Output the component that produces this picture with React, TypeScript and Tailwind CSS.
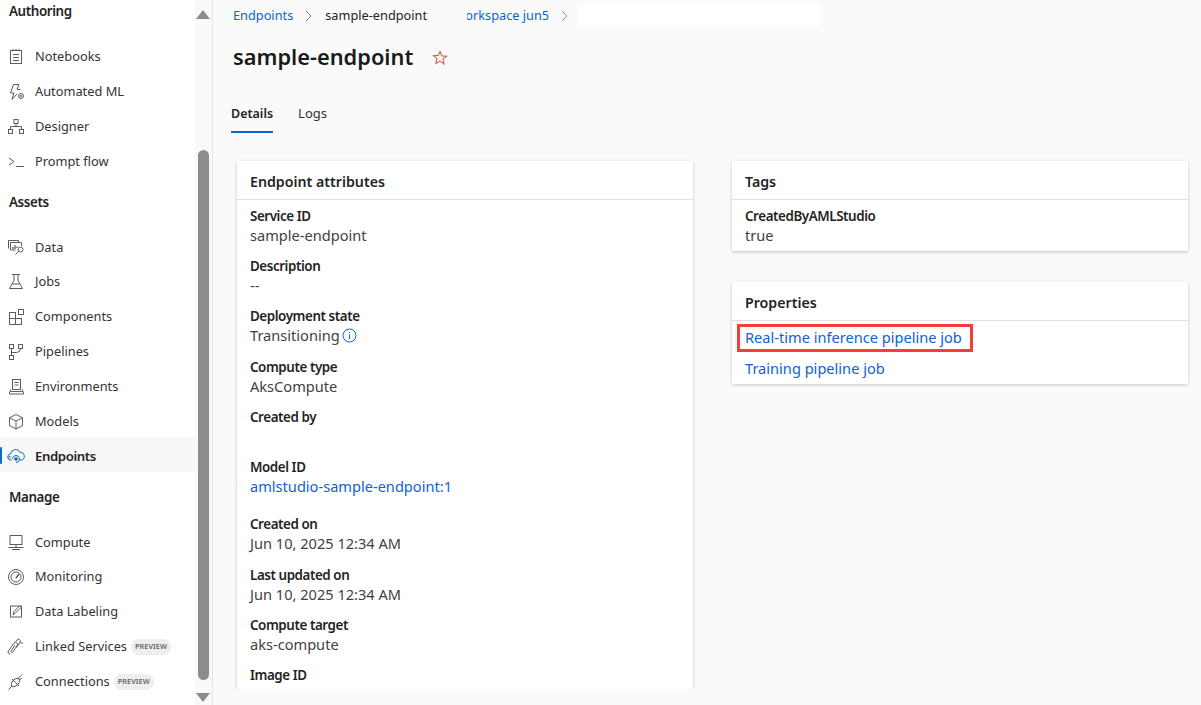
import React from "react";

const Svg = ({ children, color }: { children: React.ReactNode; color?: string }) => (
  <svg width="18" height="18" viewBox="0 0 18 18" fill="none" stroke={color || "#5c5c5c"} strokeWidth="1" className="shrink-0">
    {children}
  </svg>
);

const icons: Record<string, React.ReactNode> = {
  notebook: (
    <Svg>
      <rect x="3.5" y="2.5" width="11" height="13" />
      <path d="M6 1v2M9 1v2M12 1v2M6 6.5h6M6 9.5h6M6 12.5h6" />
    </Svg>
  ),
  automl: (
    <Svg>
      <path d="M6.5 1.5h5.5L10 6.5h3.5M6.5 1.5L3.5 10h3.5L5 16.5l5-5.5" />
      <circle cx="14" cy="13" r="2.5" />
      <circle cx="14" cy="13" r="0.8" />
    </Svg>
  ),
  designer: (
    <Svg>
      <rect x="7" y="1.5" width="4" height="4" />
      <rect x="1.5" y="11.5" width="4" height="4" />
      <rect x="12.5" y="11.5" width="4" height="4" />
      <path d="M9 5.5V8.5M3.5 11.5V8.5H14.5V11.5" />
    </Svg>
  ),
  prompt: (
    <Svg>
      <path d="M2 5l5 3.5L2 12M9 13.5h8" />
    </Svg>
  ),
  data: (
    <Svg>
      <path d="M1.5 9.5v-8h10v2M1.5 1.5h10" />
      <path d="M3.5 3.5h11v3.5M3.5 3.5v7.5h5" />
      <path d="M6 10V8M8 10V6M10 9V7.5" strokeWidth="1.3" />
      <circle cx="13.5" cy="10.5" r="2.5" />
      <path d="M11.7 12.3L8.5 15.5" />
    </Svg>
  ),
  jobs: (
    <Svg>
      <path d="M5 1.5h8M7 1.5v6L2.5 15.5h13L11 7.5v-6M5 11h8" />
    </Svg>
  ),
  components: (
    <Svg>
      <rect x="2.5" y="4.5" width="6" height="6" />
      <rect x="8.5" y="10.5" width="6" height="6" />
      <rect x="2.5" y="10.5" width="6" height="6" />
      <rect x="11.5" y="1.5" width="5" height="5" />
    </Svg>
  ),
  pipelines: (
    <Svg>
      <rect x="2.5" y="1.5" width="4" height="4" />
      <rect x="11.5" y="1.5" width="4" height="4" />
      <rect x="2.5" y="12.5" width="4" height="4" />
      <path d="M4.5 5.5v7M4.5 9.5h5q4 0 4-4" />
    </Svg>
  ),
  environments: (
    <Svg>
      <rect x="5.5" y="1.5" width="8" height="10" />
      <path d="M7.5 4.5h4M7.5 7h4M3.5 11.5v2h12v-2M2.5 13.5v2.5h14v-2.5" />
    </Svg>
  ),
  models: (
    <Svg>
      <path d="M9 1.5l6.5 3.2v8L9 16l-6.5-3.3v-8zM2.5 4.7L9 8l6.5-3.3M9 8v8" />
    </Svg>
  ),
  endpoints: (
    <Svg color="#0f6cbd">
      <path d="M4.5 12H4a3 3 0 0 1-.5-6A5 5 0 0 1 13 4.5 3.6 3.6 0 0 1 14 12h-1" />
      <path d="M5.5 11a3.5 3.5 0 1 1 3.5 3.5" />
      <circle cx="9" cy="11" r="1.3" fill="#0f6cbd" />
      <path d="M1 9h3" />
    </Svg>
  ),
  compute: (
    <Svg>
      <rect x="3" y="1.5" width="12" height="9" />
      <path d="M9 10.5v3M1.5 13.5h15M5 15.5h8" />
    </Svg>
  ),
  monitoring: (
    <Svg>
      <circle cx="9" cy="9" r="7.5" />
      <circle cx="9" cy="9" r="5" />
      <path d="M9 10l3-4" strokeWidth="1.5" />
    </Svg>
  ),
  labeling: (
    <Svg>
      <rect x="3.5" y="3" width="11" height="11" />
      <path d="M6 11.5l1-3 5.5-5.5 1.5 1.5L8.5 10z" />
    </Svg>
  ),
  linked: (
    <Svg>
      <path d="M3 16.2a2.1 2.1 0 0 1-1.6-3.2L7 5a2 2 0 0 1 3.3 2.2l-4.6 7a1 1 0 0 1-1.7-1l3.8-6" />
      <path d="M9 3.5L10 2a1.8 1.8 0 0 1 3 2l-3.5 5.5M13.5 5H16" />
    </Svg>
  ),
  connections: (
    <Svg>
      <ellipse cx="8.5" cy="9.5" rx="5" ry="3" transform="rotate(-45 8.5 9.5)" />
      <path d="M5 6l7 7M1.5 16.5L5 13M11 5.5L15 1.5M12.5 7l2.5-2" />
    </Svg>
  ),
};

type NavItem = { label: string; icon: string; h?: string; active?: boolean; preview?: boolean };

const authoring: NavItem[] = [
  { label: "Notebooks", icon: "notebook" },
  { label: "Automated ML", icon: "automl" },
  { label: "Designer", icon: "designer" },
  { label: "Prompt flow", icon: "prompt" },
];
const assets: NavItem[] = [
  { label: "Data", icon: "data", h: "h-[34px] pt-[2px]" },
  { label: "Jobs", icon: "jobs" },
  { label: "Components", icon: "components" },
  { label: "Pipelines", icon: "pipelines" },
  { label: "Environments", icon: "environments" },
  { label: "Models", icon: "models" },
  { label: "Endpoints", icon: "endpoints", active: true },
];
const manage: NavItem[] = [
  { label: "Compute", icon: "compute", h: "h-[34px] pt-[2px]" },
  { label: "Monitoring", icon: "monitoring" },
  { label: "Data Labeling", icon: "labeling" },
  { label: "Linked Services", icon: "linked", preview: true },
  { label: "Connections", icon: "connections", preview: true },
];

const NavRow = ({ item }: { item: NavItem }) => (
  <div className={`relative flex items-center gap-[10px] pl-[7px] ${item.h || "h-[35px]"} ${item.active ? "-mt-[2px] mb-[2px] bg-[#f7f7f7] pt-[5px] font-semibold text-[#242424]" : "text-[#333]"}`}>
    {item.active && <div className="absolute left-0 top-[10px] h-[17px] w-[2px] rounded-sm bg-[#0f6cbd]" />}
    {icons[item.icon]}
    <span className={item.active ? "text-[13.2px] tracking-[-0.4px]" : ""}>{item.label}</span>
    {item.preview && (
      <span className="-ml-[6px] flex h-[16px] w-[40px] items-center justify-center rounded-full bg-[#eeeeee] text-[7.4px] font-semibold text-[#666]">
        PREVIEW
      </span>
    )}
  </div>
);

const NavHeading = ({ children, className }: { children: React.ReactNode; className: string }) => (
  <div className={`h-[20px] pl-[9px] text-[13.4px] font-semibold leading-[21px] tracking-[-0.4px] text-[#242424] ${className}`}>{children}</div>
);

const Sidebar = () => (
  <div className="flex h-full shrink-0">
    <div className="w-[195px] bg-white text-[12.8px]">
      <NavHeading className="mt-px">Authoring</NavHeading>
      <div className="mt-[18px]">
        {authoring.map((item) => (
          <NavRow key={item.label} item={item} />
        ))}
      </div>
      <NavHeading className="mt-[13px]">Assets</NavHeading>
      <div className="mt-[18px]">
        {assets.map((item) => (
          <NavRow key={item.label} item={item} />
        ))}
      </div>
      <NavHeading className="mt-[15px]">Manage</NavHeading>
      <div className="mt-[18px]">
        {manage.map((item) => (
          <NavRow key={item.label} item={item} />
        ))}
      </div>
    </div>
    <div className="flex w-[18px] flex-col items-center border-r border-[#e6e6e6] bg-[#f9f9f9] pr-px">
      <div className="mt-[10px] h-0 w-0 border-x-[7px] border-b-[9px] border-x-transparent border-b-[#8c8c8c]" />
      <div className="mt-[131px] h-[530px] w-[11px] rounded-full bg-[#8c8c8c]" />
      <div className="mt-[13px] h-0 w-0 border-x-[7px] border-t-[9px] border-x-transparent border-t-[#8c8c8c]" />
    </div>
  </div>
);

const Field = ({ label, value, className, link, info }: { label: string; value?: string; className?: string; link?: boolean; info?: boolean }) => (
  <div className={className}>
    <div className="h-[20px] text-[13.4px] font-semibold leading-[21px] tracking-[-0.43px] text-[#242424]">{label}</div>
    <div className={`flex h-[20px] items-center gap-[2px] pb-px ${link ? "text-[#0f62d6]" : "text-[#424242]"}`}>
      {value}
      {info && (
        <svg width="15" height="15" viewBox="0 0 15 15" fill="none" stroke="#0f62d6" className="shrink-0">
          <circle cx="7.5" cy="7.5" r="6.5" />
          <path d="M7.5 6.5v4.5M7.5 4v1.2" />
        </svg>
      )}
    </div>
  </div>
);

const Card = ({ title, children, className }: { title: string; children: React.ReactNode; className?: string }) => (
  <div className={`w-[456px] bg-white shadow-[0_1px_3px_rgba(0,0,0,0.22)] ${className || ""}`}>
    <div className="flex h-[39px] items-center border-b border-[#e0e0e0] pl-[13px] pt-[3px] text-[14.2px] font-semibold text-[#242424]">{title}</div>
    {children}
  </div>
);

export default function App() {
  return (
    <div className="flex h-[705px] w-[1201px] overflow-hidden bg-[#fafafa] text-[14.6px]" style={{ fontFamily: '"Noto Sans", sans-serif' }}>
      <Sidebar />
      <div className="min-w-0 flex-1">
        <div className="flex h-[31px] items-center pl-[20px] text-[12.75px]">
          <span className="text-[#0f62d6]">Endpoints</span>
          <svg width="10" height="12" viewBox="0 0 10 12" fill="none" stroke="#777" className="ml-[11px] mr-[11px]">
            <path d="M2 1l5 5-5 5" />
          </svg>
          <span className="text-[#242424]">sample-endpoint</span>
          <span className="ml-[40px] flex w-[82px] justify-end overflow-hidden whitespace-nowrap text-[#0f62d6]">workspace jun5</span>
          <svg width="10" height="12" viewBox="0 0 10 12" fill="none" stroke="#999" className="ml-[11px]">
            <path d="M2 1l5 5-5 5" />
          </svg>
          <div className="ml-[8px] h-[23px] w-[242px] bg-white" />
        </div>
        <div className="flex h-[53px] items-center pl-[20px]">
          <h1 className="text-[21.8px] font-semibold text-[#1a1a1a]">sample-endpoint</h1>
          <svg width="16" height="16" viewBox="0 0 16 16" fill="none" stroke="#d9604c" strokeWidth="1.1" className="ml-[19px]">
            <path d="M8 1.5l1.9 4.4 4.6.4-3.5 3 1.1 4.7L8 11.1 3.9 13.5 5 8.8l-3.5-3 4.6-.4z" />
          </svg>
        </div>
        <div className="flex h-[49px] items-start gap-[25px] pl-[18px] pt-[19px]">
          <div className="flex h-[30px] flex-col border-b-2 border-[#0f62d6] text-[12.5px] font-semibold leading-[21px] text-[#242424]">Details</div>
          <div className="text-[13px] leading-[21px] text-[#333]">Logs</div>
        </div>
        <div className="flex h-[556px] items-start gap-[39px] overflow-hidden pl-[24px] pt-[28px]">
          <Card title="Endpoint attributes" className="min-h-[700px]">
            <div className="pl-[13px] pt-[6px]">
              <Field label="Service ID" value="sample-endpoint" />
              <Field label="Description" value="--" className="mt-[10px]" />
              <Field label="Deployment state" value="Transitioning" info className="mt-[10px]" />
              <Field label="Compute type" value="AksCompute" className="mt-[11px]" />
              <Field label="Created by" className="mt-[10px]" />
              <Field label="Model ID" value="amlstudio-sample-endpoint:1" link className="mt-[10px]" />
              <Field label="Created on" value="Jun 10, 2025 12:34 AM" className="mt-[17px]" />
              <Field label="Last updated on" value="Jun 10, 2025 12:34 AM" className="mt-[11px]" />
              <Field label="Compute target" value="aks-compute" className="mt-[10px]" />
              <Field label="Image ID" className="mt-[10px]" />
            </div>
          </Card>
          <div className="flex flex-col gap-[31px]">
            <Card title="Tags">
              <div className="h-[51px] pl-[13px] pt-[6px]">
                <Field label="CreatedByAMLStudio" value="true" />
              </div>
            </Card>
            <Card title="Properties">
              <div className="h-[63px] pl-[13px] pt-[3px] text-[#0f62d6]">
                <div className="relative h-[26px] leading-[26px]">
                  Real-time inference pipeline job
                  <div className="absolute -left-[8px] top-0 h-[28px] w-[236px] border-[3px] border-[#f53d3d]" />
                </div>
                <div className="mt-[5px] leading-[26px]">Training pipeline job</div>
              </div>
            </Card>
          </div>
        </div>
      </div>
    </div>
  );
}
